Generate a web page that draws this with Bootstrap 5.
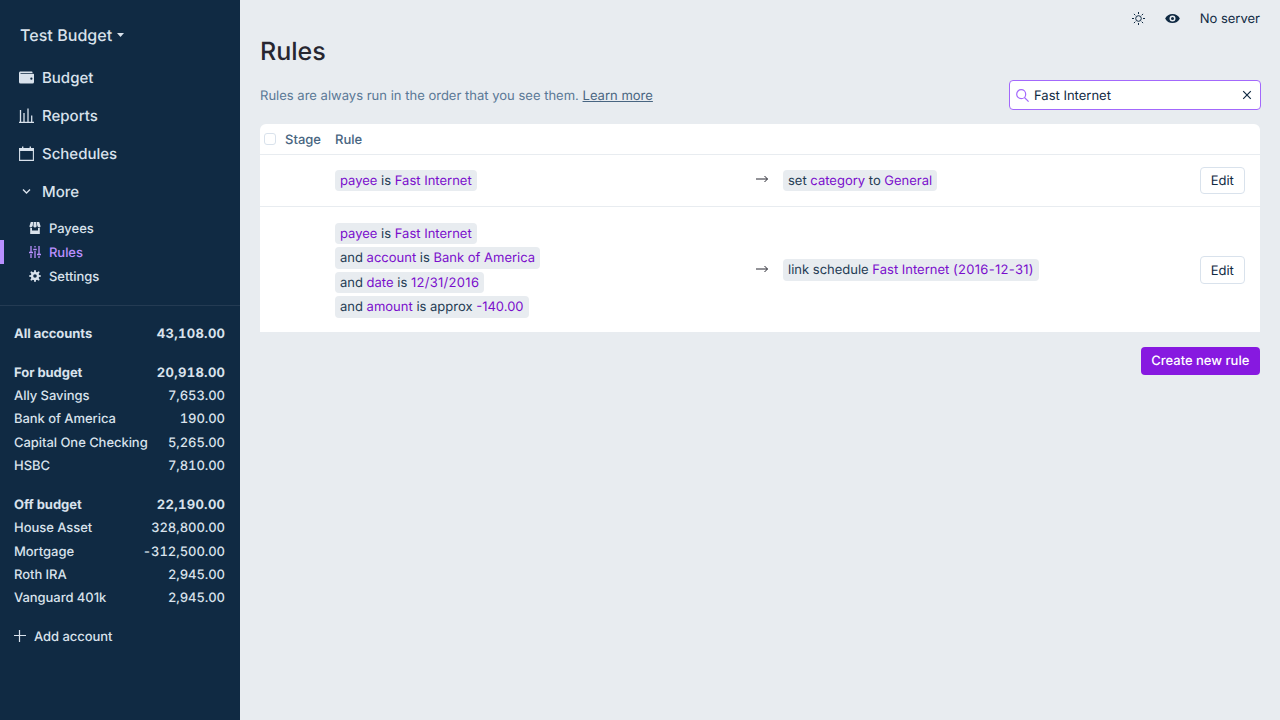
<!DOCTYPE html>
<html lang="en">
<head>
<meta charset="utf-8">
<meta name="viewport" content="width=device-width, initial-scale=1">
<title>Rules</title>
<link href="https://cdn.jsdelivr.net/npm/bootstrap@5.3.0/dist/css/bootstrap.min.css" rel="stylesheet">
<style>
body{font-family:Inter,"Liberation Sans",sans-serif;font-size:13px;line-height:16px;color:#102a43;background:#e8ecf0;height:100vh;overflow:hidden;text-rendering:geometricPrecision}
button,input{text-rendering:inherit}
svg{display:block;flex:none}
.side{width:240px;background:#102a43;color:#d9e2ec}
.side a{color:inherit;text-decoration:none}
.budget-name{font-size:16px;font-weight:500;letter-spacing:.05px;height:30px;margin:20px 0 9px 20px;gap:5px}
.main-link{height:38px;padding-left:19px;gap:8px;font-size:15px;font-weight:500}
.main-link svg{margin-top:-2px}
.sub-links{padding-top:5px}
.sub-link{height:24px;padding:2px 0 0 25px;gap:8px;font-weight:500;letter-spacing:-.05px;border-left:4px solid transparent}
.sub-link svg{margin-top:-2px}
.sub-link.current{color:#b990ff!important;border-color:#b990ff}
.accounts{border-top:1px solid #243b53;margin-top:17px;padding:16.4px 15px 0 14px}
.acct{height:23.45px;font-weight:450;letter-spacing:-.05px}
.acct span:last-child{font-feature-settings:"tnum"}
.acct.head{font-weight:700}
.acct.head span:last-child{letter-spacing:.3px;margin-right:-.3px}
.add-link{padding-top:1px}
.add-link svg{margin-top:-2px}
.gap-block{margin-top:15px}
.topbar{height:36px;padding-right:20px;gap:20px}
.topbar span{padding-top:2px}
.page-title{font-size:25px;font-weight:500;line-height:30px;color:#272630;margin:0;padding:1px 0 13px}
.hint{color:#5a7896;padding-top:2px;letter-spacing:.01px}
.hint a{color:#486581}
.search{width:252px;height:30px;border:1px solid #a368fc;border-radius:4px;background:#fff;padding:0 7px 0 6px;margin-right:-1px}
.search input{border:0;outline:0;padding:1px 5px 0;color:inherit;background:none;min-width:0}
.sheet{background:#fff;border-radius:6px 6px 0 0;margin-top:14px}
.cols{height:30.5px;border-bottom:1px solid #e8ecf0;font-weight:500;color:#486581;padding-top:2px}
.tick{width:12px;height:12px;border:1px solid #d9e2ec;border-radius:3px;margin:-2px 9px 0 4px}
.stage{width:50px}
.rule-row{height:51.5px;padding:0 15px 0 75px}
.rule-row.long{height:126px;border-top:1px solid #e8ecf0;padding-top:1px}
.conds{width:421px;gap:3px}
.rule-row svg{margin:-3px 15px 0 0}
.chip{background:#e8ecf0;border-radius:4px;padding:3px 5px;height:21.5px;color:#243b53;white-space:pre}
.chip b{font-weight:400;color:#7a0ecc}
.chip .date{letter-spacing:.3px}
.plain-btn{height:27.5px;width:45.5px;border:1px solid #d9e2ec;border-radius:4px;background:#fff;color:#102a43;padding:1px 0 0}
.main-btn{height:27.5px;width:119.5px;border:0;border-radius:4px;background:#8719e0;color:#fff;font-weight:500;padding:1px 0 0;margin-top:15px}
</style>
</head>
<body class="d-flex">
<nav class="side d-flex flex-column flex-shrink-0 vh-100">
  <div class="budget-name d-flex align-items-center">Test Budget
    <svg width="7" height="4" viewBox="0 0 7 4"><path d="M0 0h7L3.5 4z" fill="currentColor"/></svg></div>
  <a href="#" class="main-link d-flex align-items-center"><svg width="15" height="15" viewBox="0 0 20 20" fill="currentColor"><path d="M0 4c0-1.1.9-2 2-2h15a1 1 0 0 1 1 1v1H2v1h17a1 1 0 0 1 1 1v10a2 2 0 0 1-2 2H2a2 2 0 0 1-2-2V4zm16.5 9a1.5 1.5 0 1 0 0-3 1.5 1.5 0 0 0 0 3z"/></svg>Budget</a>
  <a href="#" class="main-link d-flex align-items-center"><svg width="15" height="15" viewBox="0 0 15 15" fill="none" stroke="currentColor"><path d="M0 14.4h15M1.5 14V2M5 14V5M9 14V.5M12.7 14V7.5" stroke-width="1.3"/></svg>Reports</a>
  <a href="#" class="main-link d-flex align-items-center"><svg width="15" height="15" viewBox="0 0 15 15"><path d="M.6 2.5h13.8v11.9H.6z" fill="none" stroke="currentColor" stroke-width="1.1"/><path d="M0 2h3V.5h1.4V3h6.2V.5H12V2h3v3H0z" fill="currentColor"/></svg>Schedules</a>
  <a href="#" class="main-link d-flex align-items-center"><svg width="15" height="15" viewBox="0 0 15 15" fill="none" stroke="currentColor" stroke-width="1.4"><path d="M4 5.5 7.5 9 11 5.5"/></svg>More</a>
  <div class="sub-links">
  <a href="#" class="sub-link d-flex align-items-center"><svg width="12" height="12" viewBox="0 0 20 20" fill="currentColor"><path d="M18 9.87V20H2V9.87a4.25 4.25 0 0 0 3-.38V14h10V9.5a4.26 4.26 0 0 0 3 .37zM3 0h4l-.67 6.03A3.43 3.43 0 0 1 3 9C1.34 9 .42 7.73.95 6.15L3 0zm5 0h4l.7 6.3c.17 1.5-.91 2.7-2.42 2.7h-.56A2.38 2.38 0 0 1 7.3 6.3L8 0zm5 0h4l2.05 6.15C19.58 7.73 18.65 9 17 9a3.42 3.42 0 0 1-3.33-2.97L13 0z"/></svg>Payees</a>
  <a href="#" class="sub-link current d-flex align-items-center"><svg width="12" height="12" viewBox="0 0 12 12" fill="none" stroke="currentColor" stroke-width="1.3"><path d="M2 0v6M2 8v4M6 0v1.5M6 5v7M10 0v8M10 10v2M0 6.5h4M4.3 3.5h3.4M8 8.5h4"/></svg>Rules</a>
  <a href="#" class="sub-link d-flex align-items-center"><svg width="12" height="12" viewBox="0 0 20 20" fill="currentColor"><path d="M3.94 6.5L2.22 3.64l1.42-1.42L6.5 3.94c.52-.3 1.1-.54 1.7-.7L9 0h2l.8 3.24c.6.16 1.18.4 1.7.7l2.86-1.72 1.42 1.42-1.72 2.86c.3.52.54 1.1.7 1.7L20 9v2l-3.24.8c-.16.6-.4 1.18-.7 1.7l1.72 2.86-1.42 1.42-2.86-1.72c-.52.3-1.1.54-1.7.7L11 20H9l-.8-3.24c-.6-.16-1.18-.4-1.7-.7l-2.86 1.72-1.42-1.42 1.72-2.86c-.3-.52-.54-1.1-.7-1.7L0 11V9l3.24-.8c.16-.6.4-1.18.7-1.7zM10 13a3 3 0 1 0 0-6 3 3 0 0 0 0 6z"/></svg>Settings</a>
  </div>
  <div class="accounts">
    <div class="acct head d-flex justify-content-between align-items-center"><span>All accounts</span><span>43,108.00</span></div>
    <div class="gap-block">
      <div class="acct head d-flex justify-content-between align-items-center"><span>For budget</span><span>20,918.00</span></div>
      <div class="acct d-flex justify-content-between align-items-center"><span>Ally Savings</span><span>7,653.00</span></div>
      <div class="acct d-flex justify-content-between align-items-center"><span>Bank of America</span><span>190.00</span></div>
      <div class="acct d-flex justify-content-between align-items-center"><span>Capital One Checking</span><span>5,265.00</span></div>
      <div class="acct d-flex justify-content-between align-items-center"><span>HSBC</span><span>7,810.00</span></div>
    </div>
    <div class="gap-block">
      <div class="acct head d-flex justify-content-between align-items-center"><span>Off budget</span><span>22,190.00</span></div>
      <div class="acct d-flex justify-content-between align-items-center"><span>House Asset</span><span>328,800.00</span></div>
      <div class="acct d-flex justify-content-between align-items-center"><span>Mortgage</span><span>-312,500.00</span></div>
      <div class="acct d-flex justify-content-between align-items-center"><span>Roth IRA</span><span>2,945.00</span></div>
      <div class="acct d-flex justify-content-between align-items-center"><span>Vanguard 401k</span><span>2,945.00</span></div>
    </div>
    <a href="#" class="acct add-link gap-block d-flex align-items-center gap-2"><svg width="12" height="12" viewBox="0 0 12 12" stroke="currentColor" stroke-width="1.2"><path d="M0 5.5h12M5.5 0v12"/></svg>Add account</a>
  </div>
</nav>
<main class="flex-grow-1">
  <div class="topbar d-flex align-items-center justify-content-end">
    <svg width="13" height="13" viewBox="0 0 13 13" fill="none" stroke="#102a43"><circle cx="6.5" cy="6.5" r="2.8"/><path d="M6.5 0v2M6.5 11v2M0 6.5h2M11 6.5h2M1.9 1.9l1.4 1.4M9.7 9.7l1.4 1.4M11.1 1.9 9.7 3.3M3.3 9.7l-1.4 1.4"/></svg>
    <svg width="15" height="15" viewBox="0 0 20 20" fill="#102a43"><path d="M.2 10a11 11 0 0 1 19.6 0A11 11 0 0 1 .2 10zm9.8 4a4 4 0 1 0 0-8 4 4 0 0 0 0 8zm0-2a2 2 0 1 1 0-4 2 2 0 0 1 0 4z"/></svg>
    <span>No server</span>
  </div>
  <div class="px-3 mx-1">
    <h1 class="page-title">Rules</h1>
    <div class="d-flex justify-content-between align-items-center">
      <div class="hint">Rules are always run in the order that you see them. <a href="#">Learn more</a></div>
      <div class="search d-flex align-items-center">
        <svg width="13" height="13" viewBox="0 0 13 13" fill="none" stroke="#a368fc" stroke-width="1.2"><circle cx="5.2" cy="5.2" r="4.5"/><path d="m8.5 8.5 4.1 4.1"/></svg>
        <input class="flex-grow-1" value="Fast Internet" aria-label="Filter rules">
        <svg width="12" height="12" viewBox="0 0 12 12" stroke="#102a43" stroke-width="1.2"><path d="m2.2 2.2 7.6 7.6M9.8 2.2 2.2 9.8"/></svg>
      </div>
    </div>
    <div class="sheet">
      <div class="cols d-flex align-items-center"><span class="tick"></span><span class="stage">Stage</span><span>Rule</span></div>
      <div class="rule-row d-flex align-items-center">
        <div class="conds d-flex flex-column align-items-start"><span class="chip"><b>payee</b> is <b>Fast Internet</b></span></div>
        <svg width="12" height="12" viewBox="0 0 12 12" fill="none" stroke="#272630"><path d="M0 6h11.5M8.5 3l3 3-3 3"/></svg>
        <span class="chip">set <b>category</b> to <b>General</b></span>
        <button class="plain-btn ms-auto">Edit</button>
      </div>
      <div class="rule-row long d-flex align-items-center">
        <div class="conds d-flex flex-column align-items-start">
          <span class="chip"><b>payee</b> is <b>Fast Internet</b></span>
          <span class="chip">and <b>account</b> is <b>Bank of America</b></span>
          <span class="chip">and <b>date</b> is <b class="date">12/31/2016</b></span>
          <span class="chip">and <b>amount</b> is approx <b>-140.00</b></span>
        </div>
        <svg width="12" height="12" viewBox="0 0 12 12" fill="none" stroke="#272630"><path d="M0 6h11.5M8.5 3l3 3-3 3"/></svg>
        <span class="chip">link schedule <b>Fast Internet <span class="date">(2016-12-31)</span></b></span>
        <button class="plain-btn ms-auto">Edit</button>
      </div>
    </div>
    <div class="d-flex justify-content-end"><button class="main-btn">Create new rule</button></div>
  </div>
</main>
<script src="https://cdn.jsdelivr.net/npm/bootstrap@5.3.0/dist/js/bootstrap.bundle.min.js"></script>
</body>
</html>
